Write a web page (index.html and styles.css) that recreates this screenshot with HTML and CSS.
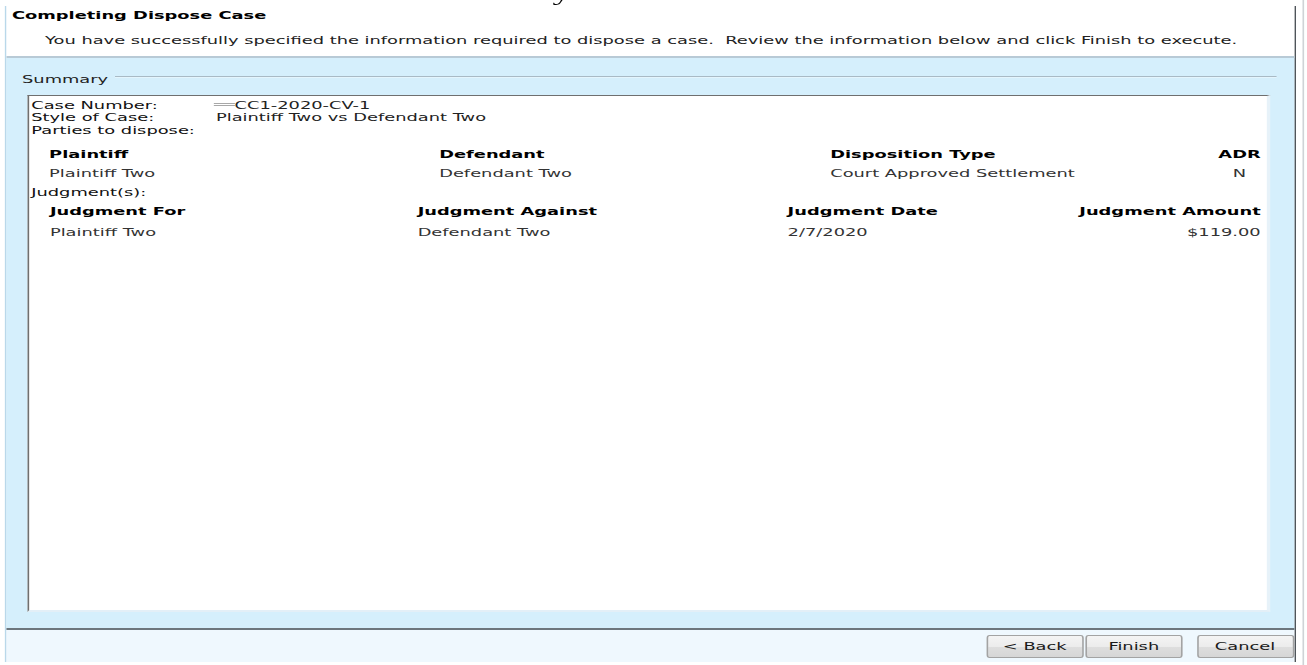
FILE: index.html
```html
<!DOCTYPE html>
<html lang="en">
<head>
    <meta charset="UTF-8">
    <title>Completing Dispose Case</title>
    <link rel="stylesheet" href="styles.css">
</head>
<body>

<div class="stage">
    <!-- tail of a letter from the page behind the dialog -->
    <span class="stray">y</span>

    <div class="window">
        <div class="header">
            <div class="title">Completing Dispose Case</div>
            <div class="subtitle">You have successfully specified the information required to dispose a case.&nbsp; Review the information below and click Finish to execute.</div>
        </div>

        <div class="panel">
            <div class="legend">
                <span class="legend-text">Summary</span>
                <span class="legend-line"></span>
            </div>

            <div class="summary-box">
                <div class="info">
                    <span class="label">Case Number:</span>
                    <span class="value"><span class="redact"></span>CC1-2020-CV-1</span>
                    <span class="label">Style of Case:</span>
                    <span class="value">Plaintiff Two vs Defendant Two</span>
                </div>
                <div class="label-line">Parties to dispose:</div>

                <div class="grid parties">
                    <div class="th">Plaintiff</div>
                    <div class="th">Defendant</div>
                    <div class="th">Disposition Type</div>
                    <div class="th center">ADR</div>
                    <div class="td">Plaintiff Two</div>
                    <div class="td">Defendant Two</div>
                    <div class="td">Court Approved Settlement</div>
                    <div class="td center">N</div>
                </div>

                <div class="label-line judg-label">Judgment(s):</div>

                <div class="grid judgments">
                    <div class="th">Judgment For</div>
                    <div class="th">Judgment Against</div>
                    <div class="th">Judgment Date</div>
                    <div class="th right">Judgment Amount</div>
                    <div class="td">Plaintiff Two</div>
                    <div class="td">Defendant Two</div>
                    <div class="td">2/7/2020</div>
                    <div class="td right">$119.00</div>
                </div>
            </div>
        </div>

        <div class="footer">
            <button type="button" class="btn">&lt; Back</button>
            <button type="button" class="btn btn--finish">Finish</button>
            <button type="button" class="btn btn--cancel">Cancel</button>
        </div>
    </div>

    <div class="edge"></div>
</div>

</body>
</html>
```

FILE: styles.css
```css
/* the captured dialog is stretched sideways, so the whole stage is too */
html, body { margin: 0; padding: 0; background: #fff; overflow: hidden; }
body { font-family: "DejaVu Sans", Verdana, sans-serif; font-size: 11px; color: #111; }

.stage { position: relative; display: flex; width: 807px; height: 665px; transform: scaleX(1.62); transform-origin: 0 0; }
.stray { position: absolute; left: 341px; top: -18px; font-family: "Liberation Serif", serif; font-size: 22px; line-height: 22px; color: #000; }

.window { display: flex; flex-direction: column; width: 795px; height: 656px; margin: 6px 0 0 2.5px; border-left: 1px solid #b9d8ea; border-right: 1px solid #4f555a; }

/* header */
.header { height: 52px; flex-shrink: 0; padding: 3px 0 0 0; box-sizing: border-box; background: #fff; border-bottom: 2px solid #b8cad6; }
.title { padding-left: 3.9px; font-weight: bold; line-height: 13px; color: #000; }
.subtitle { padding-left: 24.3px; margin-top: 12px; line-height: 13px; color: #222; white-space: nowrap; }

/* summary panel */
.panel { height: 572px; flex-shrink: 0; padding-top: 14.7px; box-sizing: border-box; background: #d5effc; border-bottom: 2px solid #6c767d; }
.legend { display: flex; align-items: flex-start; padding-left: 10.1px; margin-right: 10.7px; line-height: 13px; color: #222; }
.legend-line { flex: 1; margin: 3px 0 0 4.3px; border-top: 1px solid #a9bac5; border-bottom: 1px solid #e4f5fd; }

.summary-box { height: 517px; margin: 9.3px 15px 0 13.8px; padding: 4px 3.3px 0 1px; box-sizing: border-box; background: #fff; border-top: 1px solid #6f6f6f; border-left: 1px solid #6f6f6f; border-right: 2px solid #e7f2f9; border-bottom: 2px solid #e3eff7; }

.info { display: grid; grid-template-columns: 114px 1fr; line-height: 12.5px; }
.label, .label-line { color: #111; }
.value { color: #222; }
.label-line { line-height: 12.5px; }
.redact { display: inline-block; width: 13px; height: 1px; margin: 0 0 3px -1.5px; vertical-align: middle; border-top: 1px solid #a8a8a8; border-bottom: 1px solid #a8a8a8; }

.grid { display: grid; padding-left: 11px; }
.th { font-weight: bold; color: #000; line-height: 19px; white-space: nowrap; }
.td { color: #333; line-height: 19px; white-space: nowrap; }
.center { text-align: center; }
.right { text-align: right; }

.parties { grid-template-columns: 240.8px 241.4px 1fr auto; margin-top: 7.2px; }
.judg-label { margin-top: 4px; }
.judgments { grid-template-columns: 227px 228.4px 1fr auto; row-gap: 2px; margin-top: 2.5px; padding-left: 11.5px; }

/* buttons */
.footer { display: flex; justify-content: flex-end; flex: 1; padding-top: 5px; background: #eff8fe; }
.btn { width: 60px; height: 23px; padding: 0; box-sizing: border-box; font-family: inherit; font-size: 11px; color: #1a1a1a; border: 1px solid #a3a3a3; border-radius: 1.8px / 3px; background: linear-gradient(#f4f4f4 0%, #ececec 50%, #dedede 51%, #d6d6d6 100%); }
.btn--finish { margin-left: 1.2px; }
.btn--cancel { margin-left: 8.6px; }

.edge { margin-left: 4.3px; border-left: 1px solid #cfd3d6; }
```
